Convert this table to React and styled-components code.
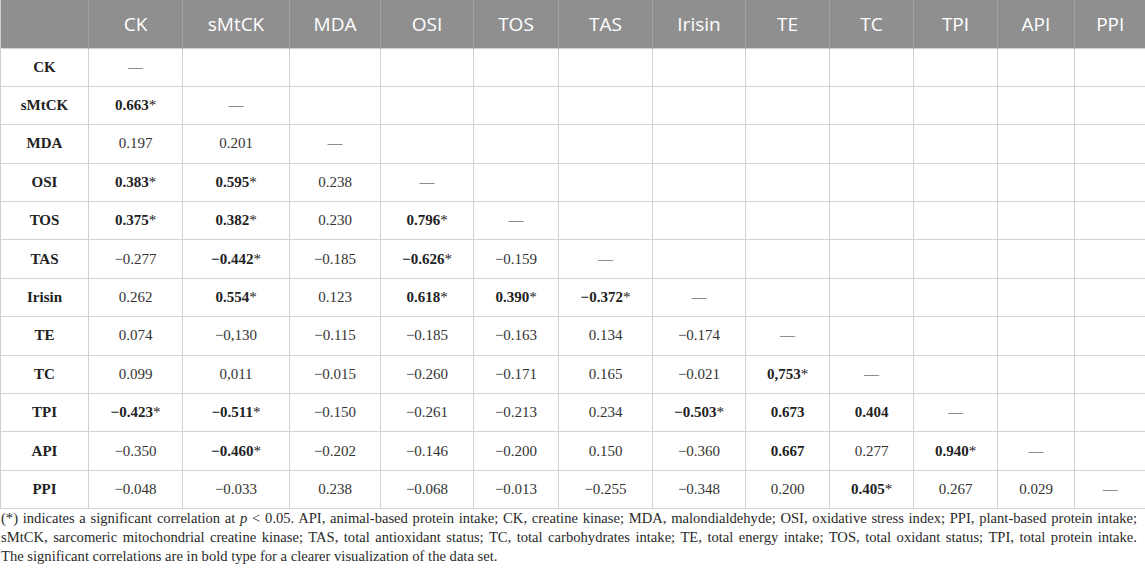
import React from "react";
import styled, { createGlobalStyle } from "styled-components";

const Global = createGlobalStyle`
  html, body { margin: 0; padding: 0; background: #fff; }
  body { width: 1145px; overflow: hidden; }
`;

const Wrap = styled.div`
  width: 1145px;
  display: flex;
  flex-direction: column;
`;

const Table = styled.table`
  width: 1145px;
  table-layout: fixed;
  border-collapse: collapse;
  border-left: 1px solid #cfcfcf;
`;

const HeadRow = styled.tr`
  height: 48px;
  background: #8f8f8f;
`;

const HeadCell = styled.th`
  color: #fff;
  font-family: "Open Sans", Lato, sans-serif;
  font-weight: 400;
  font-size: 19px;
  text-align: center;
  padding: 0;
  border-right: 1px solid #a2a2a2;
  &:last-child { border-right: none; }
`;

const Row = styled.tr`
  height: 38.4px;
`;

const RowHead = styled.th`
  font-family: "Liberation Serif", "Times New Roman", serif;
  font-weight: 700;
  font-size: 15px;
  color: #222;
  text-align: center;
  padding: 0;
  border: 1px solid #d2d2d2;
  border-left: none;
`;

const Cell = styled.td`
  font-family: "Liberation Serif", "Times New Roman", serif;
  font-weight: ${(p) => (p.$bold ? 700 : 400)};
  font-size: 15px;
  color: ${(p) => (p.$bold ? "#222" : "#333")};
  text-align: center;
  padding: 0;
  border: 1px solid #d2d2d2;
  &:last-child { border-right: none; }
`;

const Star = styled.span`
  font-weight: 400;
`;

const Note = styled.div`
  padding: 0 8px 0 1px;
  font-family: "Liberation Serif", "Times New Roman", serif;
  font-size: 14.6px;
  line-height: 19px;
  color: #2a2a2a;
`;

const NotePart = styled.p`
  margin: 0;
  text-align: ${(p) => (p.$justify ? "justify" : "left")};
  text-align-last: ${(p) => (p.$justify ? "justify" : "auto")};
`;

const widths = [88, 94, 107, 91, 93, 85, 94, 93, 84, 84, 84, 77, 71];
const cols = ["CK", "sMtCK", "MDA", "OSI", "TOS", "TAS", "Irisin", "TE", "TC", "TPI", "API", "PPI"];

// "b:" prefix means bold; trailing * is significant
const rows = [
  ["CK", ["—"]],
  ["sMtCK", ["b:0.663*", "—"]],
  ["MDA", ["0.197", "0.201", "—"]],
  ["OSI", ["b:0.383*", "b:0.595*", "0.238", "—"]],
  ["TOS", ["b:0.375*", "b:0.382*", "0.230", "b:0.796*", "—"]],
  ["TAS", ["−0.277", "b:−0.442*", "−0.185", "b:−0.626*", "−0.159", "—"]],
  ["Irisin", ["0.262", "b:0.554*", "0.123", "b:0.618*", "b:0.390*", "b:−0.372*", "—"]],
  ["TE", ["0.074", "−0,130", "−0.115", "−0.185", "−0.163", "0.134", "−0.174", "—"]],
  ["TC", ["0.099", "0,011", "−0.015", "−0.260", "−0.171", "0.165", "−0.021", "b:0,753*", "—"]],
  ["TPI", ["b:−0.423*", "b:−0.511*", "−0.150", "−0.261", "−0.213", "0.234", "b:−0.503*", "b:0.673", "b:0.404", "—"]],
  ["API", ["−0.350", "b:−0.460*", "−0.202", "−0.146", "−0.200", "0.150", "−0.360", "b:0.667", "0.277", "b:0.940*", "—"]],
  ["PPI", ["−0.048", "−0.033", "0.238", "−0.068", "−0.013", "−0.255", "−0.348", "0.200", "b:0.405*", "0.267", "0.029", "—"]],
];

function Value({ v }) {
  const bold = v.startsWith("b:");
  const text = bold ? v.slice(2) : v;
  const star = text.endsWith("*");
  const num = star ? text.slice(0, -1) : text;
  return (
    <Cell $bold={bold}>
      {num}
      {star && <Star>*</Star>}
    </Cell>
  );
}

export default function App() {
  return (
    <Wrap>
      <Global />
      <Table>
        <colgroup>
          {widths.map((w, i) => (
            <col key={i} style={{ width: w }} />
          ))}
        </colgroup>
        <thead>
          <HeadRow>
            <HeadCell />
            {cols.map((c) => (
              <HeadCell key={c}>{c}</HeadCell>
            ))}
          </HeadRow>
        </thead>
        <tbody>
          {rows.map(([name, vals]) => (
            <Row key={name}>
              <RowHead>{name}</RowHead>
              {cols.map((c, i) =>
                i < vals.length ? <Value key={c} v={vals[i]} /> : <Cell key={c} />
              )}
            </Row>
          ))}
        </tbody>
      </Table>
      <Note>
        <NotePart $justify>
          (*) indicates a significant correlation at <i>p</i> &lt; 0.05. API, animal-based protein intake; CK, creatine kinase; MDA, malondialdehyde; OSI, oxidative stress index; PPI, plant-based protein intake; sMtCK, sarcomeric mitochondrial creatine kinase; TAS, total antioxidant status; TC, total carbohydrates intake; TE, total energy intake; TOS, total oxidant status; TPI, total protein intake.
        </NotePart>
        <NotePart>
          The significant correlations are in bold type for a clearer visualization of the data set.
        </NotePart>
      </Note>
    </Wrap>
  );
}
